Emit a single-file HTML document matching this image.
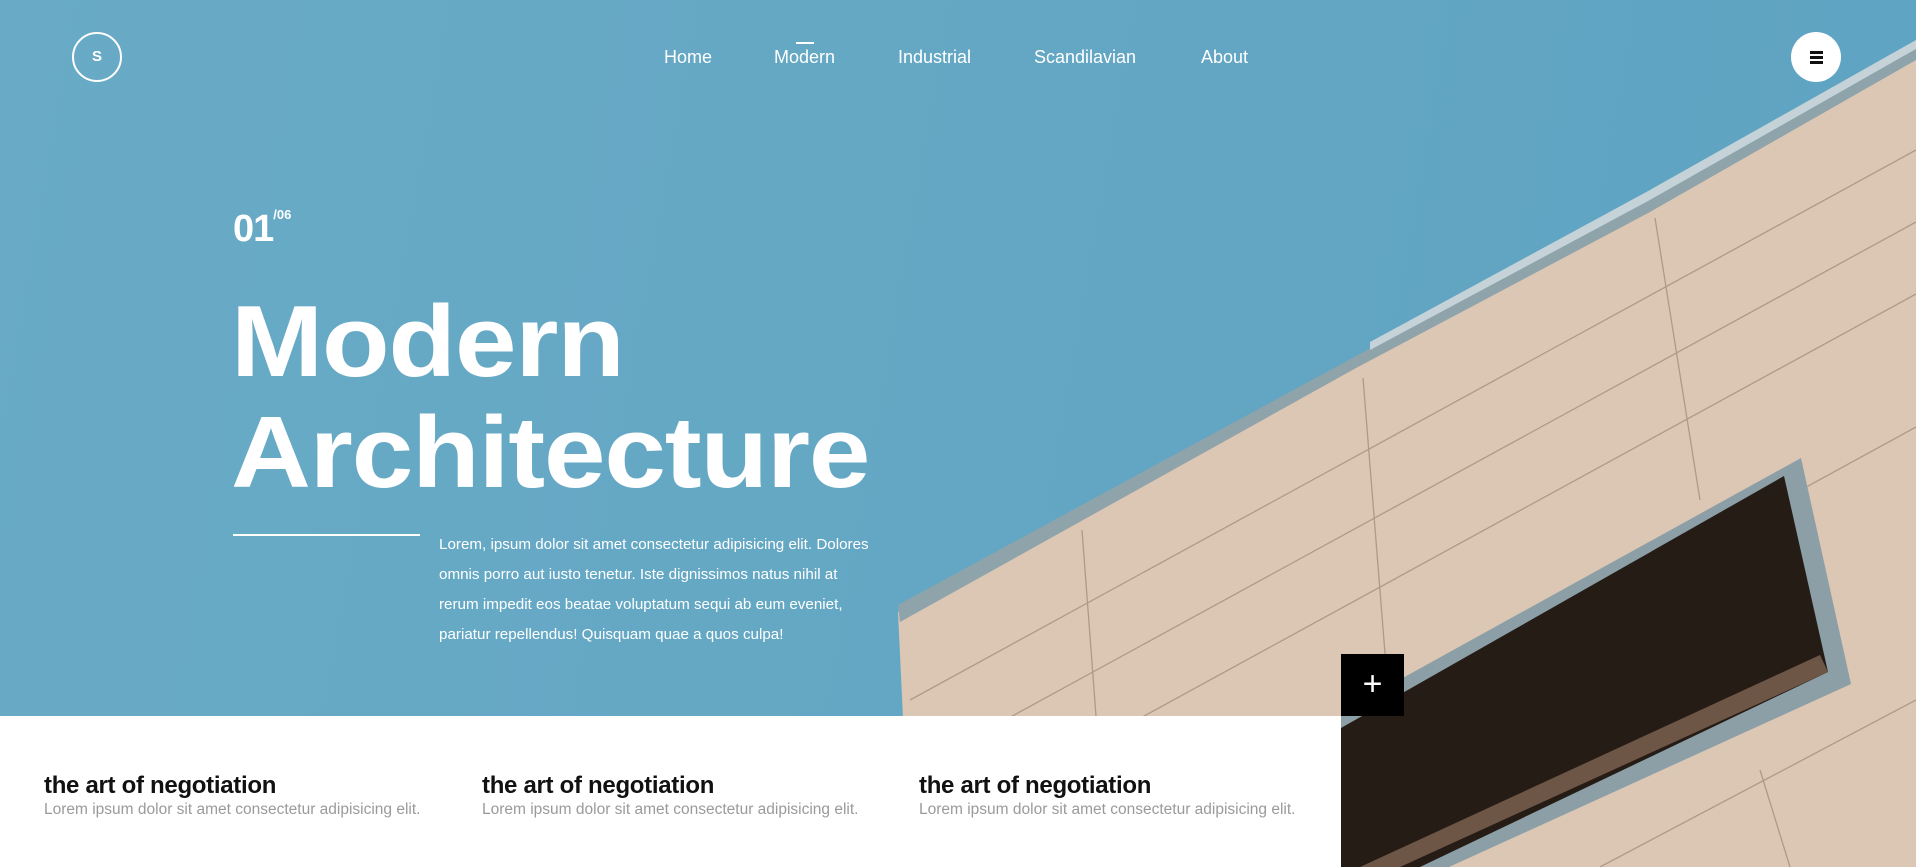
<!DOCTYPE html>
<html><head><meta charset="utf-8"><style>
*{margin:0;padding:0;box-sizing:border-box}
html,body{width:1916px;height:867px;overflow:hidden}
body{position:relative;font-family:"Liberation Sans",sans-serif;background:#fff}
.hero{position:absolute;left:0;top:0;width:1916px;height:867px;background:linear-gradient(100deg,#69abc6,#5ea3c2)}
svg.b{position:absolute;left:0;top:0;display:block}
.logo{position:absolute;left:72px;top:32px;width:50px;height:50px;border:2.5px solid #fff;border-radius:50%;color:#fff;font-weight:bold;font-size:15px;text-align:center;line-height:45px}
.nav a{position:absolute;top:47px;color:#fff;font-size:18px;text-decoration:none}
.bar{position:absolute;left:796px;top:42px;width:18px;height:2px;background:#fff}
.menu{position:absolute;left:1791px;top:32px;width:50px;height:50px;background:#fff;border-radius:50%}
.menu i{position:absolute;left:19px;width:13px;height:2.5px;background:#111}
.num{position:absolute;left:233px;top:208px;color:#fff;font-weight:bold;font-size:38px;letter-spacing:-1px}
.num sup{font-size:13px;position:relative;top:-8px;letter-spacing:0}
h1{position:absolute;left:231px;top:287px;color:#fff;font-size:101px;line-height:111px;font-weight:bold;letter-spacing:-1px;transform:scaleX(1.095);transform-origin:0 0}
.line{position:absolute;left:233px;top:534px;width:187px;height:2px;background:#fff}
.p{position:absolute;left:439px;top:530px;width:436px;color:#fff;font-size:15.2px;line-height:30px}
.wb{position:absolute;left:0;top:716px;width:1341px;height:151px;background:#fff}
.plus{position:absolute;left:1341px;top:654px;width:63px;height:62px;background:#000;color:#fff;font-size:34px;text-align:center;line-height:60px}
.f{position:absolute;top:772px}
.f h3{font-size:24px;font-weight:bold;color:#111;letter-spacing:-.3px}
.f p{font-size:15.5px;color:#9a9a9a;margin-top:1px}
</style></head><body>
<div class="hero"></div>
<svg class="b" width="1916" height="867" viewBox="0 0 1916 867">
<polygon points="898,612 1356,362 1650,206 1916,60 1916,867 910,867" fill="#dcc6b4"/>
<polygon points="898,605 1356,356 1650,200 1916,49 1916,60 1650,212 1356,368 900,622" fill="#8fa3aa"/>
<polygon points="1370,342 1650,190 1916,40 1916,49 1650,200 1370,350" fill="#c5d3d8"/>
<g stroke="#9c8676" stroke-width="1.3" opacity=".7">
<line x1="910" y1="700" x2="1916" y2="150"/>
<line x1="910" y1="772" x2="1916" y2="222"/>
<line x1="910" y1="844" x2="1916" y2="294"/>
<line x1="1600" y1="600" x2="1916" y2="427"/>
<line x1="1600" y1="867" x2="1916" y2="700"/>
<line x1="1082" y1="530" x2="1096" y2="716"/>
<line x1="1363" y1="378" x2="1390" y2="716"/>
<line x1="1655" y1="218" x2="1700" y2="500"/>
<line x1="1760" y1="770" x2="1790" y2="867"/>
</g>
<polygon points="1801,458 1851,684 1449,867 1341,867 1341,712" fill="#8c9fa7"/>
<polygon points="1784,476 1828,672 1420,867 1341,867 1341,728" fill="#261c16"/>
<polygon points="1828,672 1820,655 1360,867 1400,867" fill="#6e5646"/>
</svg>
<div class="logo">S</div>
<div class="nav"><a style="left:664px">Home</a><a style="left:774px">Modern</a><a style="left:898px">Industrial</a><a style="left:1034px">Scandilavian</a><a style="left:1201px">About</a></div>
<div class="bar"></div>
<div class="menu"><i style="top:19px"></i><i style="top:24px"></i><i style="top:29px"></i></div>
<div class="num">01<sup>/06</sup></div>
<h1>Modern<br>Architecture</h1>
<div class="line"></div>
<div class="p">Lorem, ipsum dolor sit amet consectetur adipisicing elit. Dolores omnis porro aut iusto tenetur. Iste dignissimos natus nihil at rerum impedit eos beatae voluptatum sequi ab eum eveniet, pariatur repellendus! Quisquam quae a quos culpa!</div>
<div class="wb"></div>
<div class="plus">+</div>
<div class="f" style="left:44px"><h3>the art of negotiation</h3><p>Lorem ipsum dolor sit amet consectetur adipisicing elit.</p></div>
<div class="f" style="left:482px"><h3>the art of negotiation</h3><p>Lorem ipsum dolor sit amet consectetur adipisicing elit.</p></div>
<div class="f" style="left:919px"><h3>the art of negotiation</h3><p>Lorem ipsum dolor sit amet consectetur adipisicing elit.</p></div>
</body></html>
